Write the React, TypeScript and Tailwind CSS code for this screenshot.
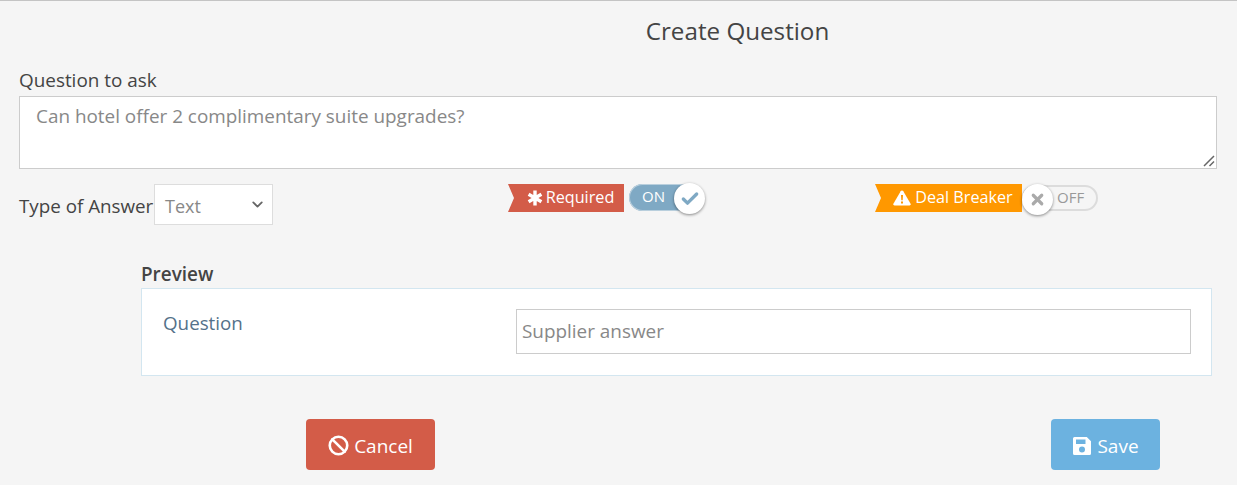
import { Ban, Check, ChevronDown, X } from "lucide-react";

export default function App() {
  return (
    <div className="h-[485px] w-[1237px] overflow-hidden border-t border-[#c4c4c4] bg-[#f5f5f5] font-['Open_Sans',sans-serif] text-[#444]">
      <h1 className="pt-[15px] pl-[238px] text-center text-[24.2px] leading-[30px] text-[#444]">Create Question</h1>

      <div className="px-[19px] pt-[22px]">
        <label className="block text-[18.9px] leading-[25px]">Question to ask</label>
        <div className="relative mt-[3px] h-[73px] w-[1198px] border border-[#ccc] bg-white px-4 py-[6px] text-[18.9px] leading-[26px] text-[#888]">
          Can hotel offer 2 complimentary suite upgrades?
          <svg className="absolute right-[1px] bottom-[1px]" width="12" height="12" viewBox="0 0 12 12">
            <path d="M1 11 11 1M6.500 11l4.500-4.500" stroke="#666" strokeWidth="1.500" fill="none" />
          </svg>
        </div>

        <div className="mt-[15px] flex items-start">
          <div className="flex w-[489px] items-center">
            <span className="w-[135px] pt-[4px] text-[18.8px] leading-[25px] whitespace-nowrap">Type of Answer</span>
            <div className="flex h-[41px] w-[119px] items-center justify-between border border-[#ddd] bg-white pt-[3px] pr-[6px] pl-[10px] text-[18px] text-[#888]">
              Text
              <ChevronDown size={17} strokeWidth={2.500} className="-mt-[3px] text-[#666]" />
            </div>
          </div>

          <div className="flex w-[367px] items-start">
            <div className="flex h-[28px] w-[116px] items-center justify-center gap-[3px] bg-[#d35c48] pb-[1px] pl-[9px] text-[16.200px] text-white [clip-path:polygon(0_0,100%_0,100%_100%,0_100%,6px_50%)]">
              <svg width="16" height="16" viewBox="0 0 15 15">
                <path d="M7.500 0.500v14M1.500 4l12 7M13.500 4l-12 7" stroke="white" strokeWidth="3.200" fill="none" />
              </svg>
              Required
            </div>
            <div className="relative ml-[5px] h-[27px] w-[71px] rounded-full bg-[#7fa9c4] pl-[13px] text-[15px] leading-[25px] text-white shadow-[inset_0_0_0_1px_#b9cfdd]">
              ON
              <div className="absolute -top-[1px] -right-[5px] flex h-[31px] w-[31px] items-center justify-center rounded-full bg-white shadow-[0_1px_3px_rgba(0,0,0,0.45)]">
                <Check size={20} strokeWidth={4} className="text-[#7fa9c4]" />
              </div>
            </div>
          </div>

          <div className="flex items-start">
            <div className="flex h-[28px] w-[147px] items-center justify-center gap-[4px] bg-[#ff9800] pb-[1px] pl-[9px] text-[16.200px] text-white [clip-path:polygon(0_0,100%_0,100%_100%,0_100%,6px_50%)]">
              <svg width="18" height="16" viewBox="0 0 18 16">
                <path d="M9 0.500c.6 0 1 .3 1.300.8l7.300 12.400c.5.9-.1 1.800-1.100 1.800H1.500c-1 0-1.600-.9-1.100-1.800L7.700 1.300C8 .8 8.400.5 9 .5z" fill="white" />
                <path d="M8 5h2l-.3 5.200H8.300z M8 11.500h2v2H8z" fill="#ff9800" />
              </svg>
              Deal Breaker
            </div>
            <div className="relative mt-[1px] h-[26px] w-[76px] rounded-full border-2 border-[#dcdcdc] bg-[#f5f5f5] pl-[33px] text-[15px] leading-[20px] text-[#999]">
              OFF
              <div className="absolute -top-[3px] -left-[2px] flex h-[31px] w-[31px] items-center justify-center rounded-full bg-white shadow-[0_1px_3px_rgba(0,0,0,0.45)]">
                <X size={17} strokeWidth={4.500} className="text-[#aaa]" />
              </div>
            </div>
          </div>
        </div>
      </div>

      <div className="mt-[37px] ml-[141px] w-[1071px]">
        <div className="text-[18.9px] leading-[25px] font-semibold text-[#444]">Preview</div>
        <div className="mt-[1px] flex h-[88px] border border-[#d3e6f0] bg-white pt-5 pr-5 pl-[21px]">
          <div className="w-[353px] text-[18.800px] leading-[28px] text-[#54718a]">Question</div>
          <div className="flex h-[45px] w-[675px] items-center border border-[#ccc] px-[5px] text-[18.900px] text-[#888]">
            Supplier answer
          </div>
        </div>
      </div>

      <div className="mt-[43px] flex">
        <button className="ml-[306px] flex h-[51px] w-[129px] items-center justify-center gap-[5px] rounded-[4px] bg-[#d35c48] pt-[3px] text-[19px] text-white">
          <Ban size={21} strokeWidth={3} className="-mt-[1px]" />
          Cancel
        </button>
        <button className="ml-[616px] flex h-[51px] w-[109px] items-center justify-center gap-[5px] rounded-[4px] bg-[#6cb2e0] pt-[3px] text-[19px] text-white">
          <svg className="-mt-[1px]" width="20" height="20" viewBox="0 0 20 20">
            <path fillRule="evenodd" fill="white" d="M2.500 1h12.300L19 5.200V17.500a1.500 1.500 0 0 1-1.500 1.500h-15A1.500 1.500 0 0 1 1 17.500v-15A1.500 1.500 0 0 1 2.500 1zM4 3.500v4.500h9.500V3.500zM10 10.500a3 3 0 1 0 0 6 3 3 0 0 0 0-6z" />
          </svg>
          Save
        </button>
      </div>
    </div>
  );
}
